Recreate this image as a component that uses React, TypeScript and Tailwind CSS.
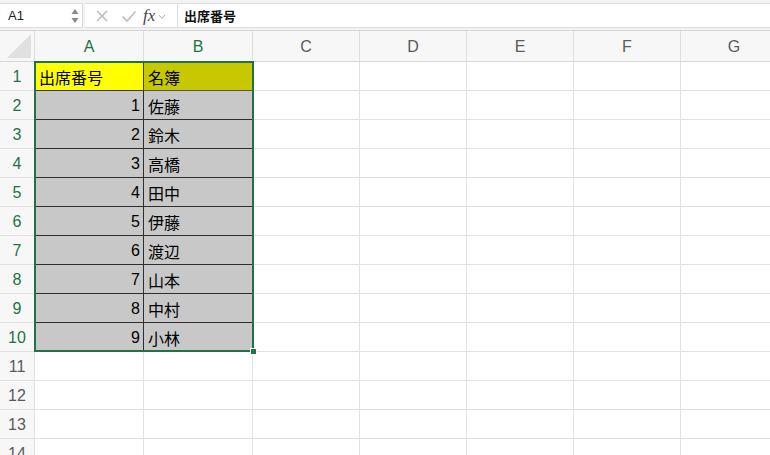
import React from "react";

const cols = [
  { l: "A", w: 109 },
  { l: "B", w: 109 },
  { l: "C", w: 107 },
  { l: "D", w: 107 },
  { l: "E", w: 107 },
  { l: "F", w: 107 },
  { l: "G", w: 107 },
];

const names = ["佐藤", "鈴木", "高橋", "田中", "伊藤", "渡辺", "山本", "中村", "小林"];

const jp = { fontFamily: '"Noto Sans CJK JP", "Noto Sans", sans-serif' };
const lat = { fontFamily: '"Liberation Sans", Arial, sans-serif' };

function Cell({ r, c }: { r: number; c: number }) {
  const w = cols[c].w;
  let bg = "bg-white";
  let content: React.ReactNode = null;
  let border = "border-r border-b border-[#e2e2e2]";
  let align = "justify-start pl-[4px]";
  if (r <= 10 && c <= 1) {
    if (r === 1) {
      bg = c === 0 ? "bg-[#ffff00]" : "bg-[#c8c800]";
      content = c === 0 ? "出席番号" : "名簿";
      border = c === 0 ? "border-r border-b border-[#3a3a3a]" : "border-r border-b border-[#555]";
    } else {
      bg = "bg-[#c8c8c8]";
      if (c === 0) {
        content = String(r - 1);
        align = "justify-end pr-[3px]";
      } else content = names[r - 2];
      border = "border-r border-b border-[#2e2e2e]";
    }
  }
  return (
    <div
      className={`flex items-center shrink-0 h-full pt-[2px] text-[16px] text-black ${bg} ${border} ${align}`}
      style={{ width: w, ...(content && /\d/.test(String(content)) ? lat : jp) }}
    >
      {content}
    </div>
  );
}

export default function App() {
  const rows = Array.from({ length: 14 }, (_, i) => i + 1);
  return (
    <div className="w-[770px] h-[455px] overflow-hidden bg-white relative" style={lat}>
      {/* formula bar */}
      <div className="h-[31px] bg-[#f3f3f3] flex items-stretch pt-[3px] pb-[2px] border-b border-[#d4d4d4]">
        <div className="w-[83px] bg-white border border-[#dcdcdc] border-l-0 flex items-center justify-between pl-[8px] pr-[3px]">
          <span className="text-[13px] text-[#222]">A1</span>
          <svg width="8" height="16" viewBox="0 0 8 16">
            <path d="M4 1 L7.5 6 L0.5 6 Z" fill="#8a8a8a" />
            <path d="M4 15 L7.5 10 L0.5 10 Z" fill="#8a8a8a" />
          </svg>
        </div>
        <div className="w-[92px] bg-white border-y border-[#dcdcdc] flex items-center ml-[2px]">
          <svg width="14" height="14" viewBox="0 0 14 14" className="ml-[10px]">
            <path d="M2 2 L12 12 M12 2 L2 12" stroke="#bdbdbd" strokeWidth="1.6" />
          </svg>
          <svg width="16" height="14" viewBox="0 0 16 14" className="ml-[12px]">
            <path d="M1.5 7.5 L6 12 L14.5 2.5" stroke="#bdbdbd" strokeWidth="1.6" fill="none" />
          </svg>
          <span
            className="ml-[6px] text-[17px] italic text-[#444]"
            style={{ fontFamily: '"Liberation Serif", "Times New Roman", serif' }}
          >
            fx
          </span>
          <svg width="8" height="6" viewBox="0 0 8 6" className="ml-[3px] mt-[2px]">
            <path d="M1 1 L4 4.5 L7 1" stroke="#b0b0b0" strokeWidth="1" fill="none" />
          </svg>
        </div>
        <div className="flex-1 bg-white border border-[#dcdcdc] border-r-0 flex items-center pl-[6px]">
          <span className="text-[13px] text-[#111] font-semibold" style={jp}>
            出席番号
          </span>
        </div>
      </div>
      {/* header row */}
      <div className="flex h-[31px] border-b border-[#d8d8d8] bg-[#f7f7f7]">
        <div className="w-[35px] shrink-0 h-full border-r border-[#dcdcdc] relative flex items-end justify-end pb-[3px] pr-[3px]">
          <svg width="24" height="24" viewBox="0 0 24 24">
            <path d="M24 0 L24 24 L0 24 Z" fill="#e0e0e0" />
          </svg>
        </div>
        {cols.map((c, i) => (
          <div
            key={c.l}
            className={`shrink-0 h-full flex items-center justify-center pt-[1px] border-r border-[#dedede] text-[16px] ${
              i <= 1 ? "text-[#217346]" : "text-[#5a5a5a]"
            }`}
            style={{ width: c.w }}
          >
            {c.l}
          </div>
        ))}
      </div>
      {/* body */}
      <div className="relative">
        {rows.map((r) => (
          <div key={r} className="flex h-[29px]">
            <div
              className={`w-[35px] shrink-0 h-full flex items-center justify-center pt-[2px] bg-[#f7f7f7] border-r border-b border-[#e0e0e0] text-[16px] ${
                r <= 10 ? "text-[#217346]" : "text-[#5a5a5a]"
              }`}
            >
              {r}
            </div>
            {cols.map((c, ci) => (
              <Cell key={c.l} r={r} c={ci} />
            ))}
          </div>
        ))}
        {/* selection border */}
        <div className="absolute left-[34px] top-[-1px] w-[220px] h-[291px] border-2 border-[#217346] pointer-events-none" />
        <div className="absolute left-[250px] top-[286px] w-[7px] h-[7px] bg-[#217346] border border-white" />
      </div>
    </div>
  );
}
